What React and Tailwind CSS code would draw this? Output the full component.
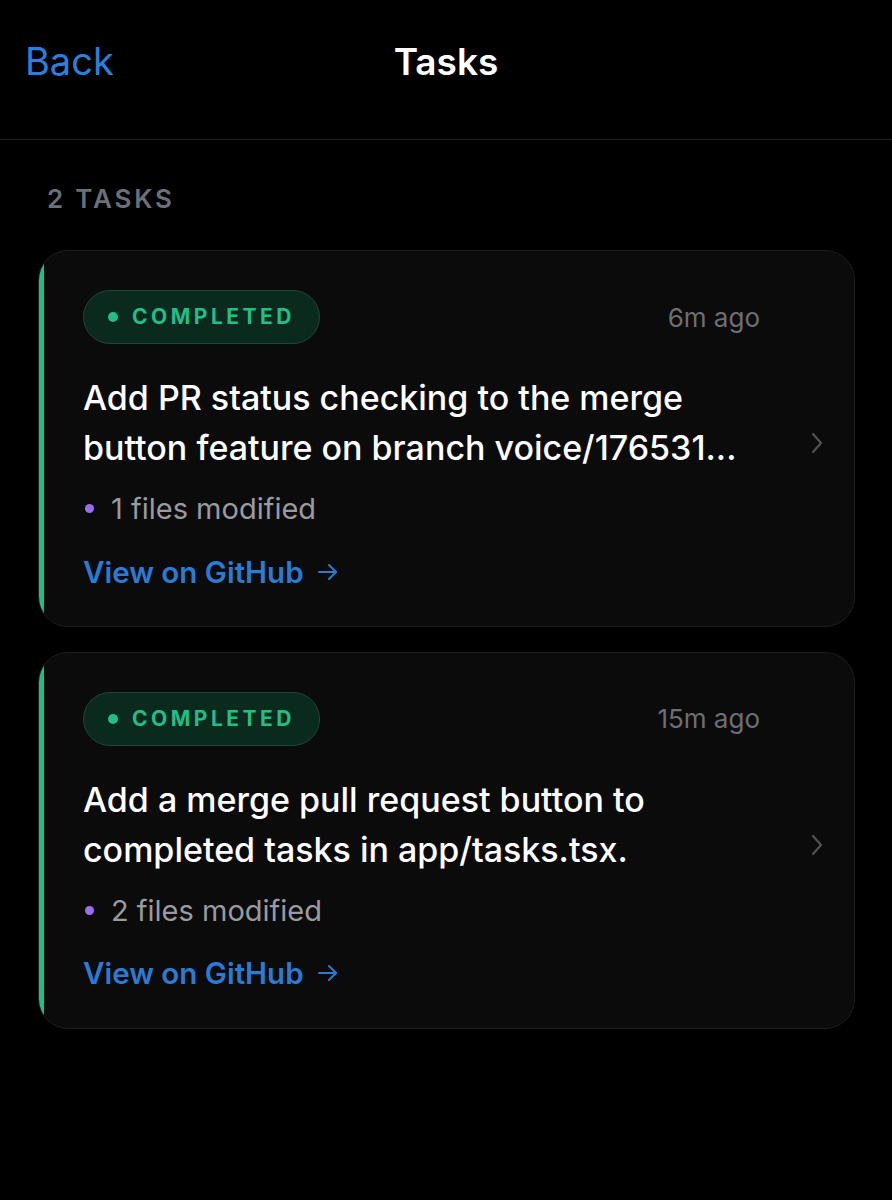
import React from 'react'

const tasks = [
    {
        id: 1,
        time: '6m ago',
        title: 'Add PR status checking to the merge button feature on branch voice/176531...',
        files: 1,
    },
    {
        id: 2,
        time: '15m ago',
        title: 'Add a merge pull request button to completed tasks in app/tasks.tsx.',
        files: 2,
    },
];

const TaskCard = ({ task }) => {
    return (
        <div className="flex rounded-[30px] border border-[#1e1e20] bg-[#0b0b0c] overflow-hidden">
            <div className="w-[5px] bg-[#1fbf87] shrink-0" />
            <div className="flex-1 flex items-center pl-[39px] pr-[30px]">
                <div className="flex-1 pt-[39px] pb-[32px]">
                    <div className="flex items-center justify-between pr-[50px]">
                        <div className="flex items-center h-[54px] px-[24px] gap-[14px] rounded-full bg-[#0b2a1e] border border-[#1a4a37]">
                            <span className="w-[10px] h-[10px] rounded-full bg-[#1fbf87]" />
                            <span className="text-[21px] font-bold tracking-[3.5px] text-[#1fbf87]">COMPLETED</span>
                        </div>
                        <span className="text-[26px] text-[#6e6e73]">{task.time}</span>
                    </div>
                    <div className="mt-[29px] text-[34px] leading-[50px] font-medium text-white pr-[50px]">
                        {task.title}
                    </div>
                    <div className="mt-[14px] flex items-center gap-[17px] pl-[2px]">
                        <span className="w-[9px] h-[9px] rounded-full bg-[#9b6cf0]" />
                        <span className="text-[29px] text-[#9a9aa0]">{task.files} files modified</span>
                    </div>
                    <div className="mt-[19px] text-[29.5px] font-semibold text-[#2a7bd4] flex items-center gap-[12px]">
                        View on GitHub
                        <svg width="24" height="24" viewBox="0 0 24 24" fill="none" stroke="currentColor" strokeWidth="2" strokeLinecap="round" strokeLinejoin="round">
                            <path d="M3 12h17" />
                            <path d="M13 5l7 7-7 7" />
                        </svg>
                    </div>
                </div>
                <svg width="14" height="26" viewBox="0 0 14 26" fill="none" stroke="#505056" strokeWidth="2.2" strokeLinecap="round" strokeLinejoin="round" className="shrink-0 mt-[10px]">
                    <path d="M3 4l8 9-8 9" />
                </svg>
            </div>
        </div>
    );
};

const App = () => {
    return (
        <div className="min-h-[1200px] w-full bg-black" style={{ fontFamily: 'Inter, "Noto Sans", sans-serif' }}>
            <div className="relative h-[140px] border-b border-[#1c1c1e] flex items-center justify-center pb-[16px]">
                <span className="absolute left-[25px] top-[33px] text-[38px] text-[#2a80dc]">Back</span>
                <span className="text-[37px] font-semibold text-white">Tasks</span>
            </div>
            <div className="px-[38px] pt-[39px]">
                <div className="pl-[9px] text-[26px] font-semibold tracking-[2.8px] text-[#6b6f78]">2 TASKS</div>
                <div className="mt-[32px] flex flex-col gap-[25px] mr-[-1px]">
                    {tasks.map((task) => (
                        <TaskCard key={task.id} task={task} />
                    ))}
                </div>
            </div>
        </div>
    );
};

export default App;
